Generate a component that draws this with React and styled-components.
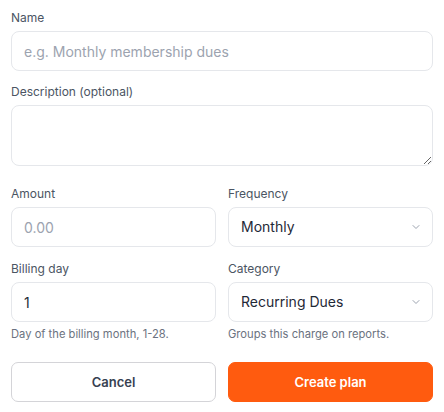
import React from "react";
import styled, { createGlobalStyle } from "styled-components";

const Global = createGlobalStyle`
  html, body { margin: 0; padding: 0; background: #ffffff; }
  body { font-family: Inter, "Noto Sans", sans-serif; -webkit-font-smoothing: antialiased; }
  * { box-sizing: border-box; }
`;

const Form = styled.form`
  width: 444px;
  padding: 10px 11px 10px 11px;
  display: flex;
  flex-direction: column;
  gap: 13px;
`;

const Row = styled.div`
  display: grid;
  grid-template-columns: 1fr 1fr;
  column-gap: 12px;
  margin-top: ${(p) => p.$shift || 0}px;
`;

const Field = styled.div`
  display: flex;
  flex-direction: column;
  min-width: 0;
`;

const Label = styled.label`
  font-size: 12px;
  line-height: 16px;
  font-weight: 400;
  color: #4b5563;
  margin-bottom: 5px;
`;

const controlBase = `
  width: 100%;
  border: 1px solid #e5e7eb;
  border-radius: 8px;
  background: #ffffff;
  font-family: Inter, "Noto Sans", sans-serif;
  font-size: 14px;
  line-height: 20px;
  color: #1f2937;
  padding: 0 12px;
  outline: none;
`;

const Input = styled.input`
  ${controlBase}
  height: 40px;
  &::placeholder { color: #9ca3af; }
`;

const TextArea = styled.textarea`
  ${controlBase}
  display: block;
  height: 61px;
  padding: 10px 12px;
  resize: vertical;
  margin-bottom: ${(p) => p.$after || 0}px;
`;

const SelectWrap = styled.div`
  position: relative;
`;

const Select = styled.select`
  ${controlBase}
  height: 40px;
  padding-top: 0;
  padding-bottom: 1px;
  appearance: none;
  -webkit-appearance: none;
  padding-right: 32px;
`;

const Chevron = styled.svg`
  position: absolute;
  right: 11px;
  top: 14px;
  width: 12px;
  height: 12px;
  pointer-events: none;
`;

const Hint = styled.p`
  margin: 5px 0 0;
  font-size: 11.2px;
  line-height: 14px;
  color: #6b7280;
`;

const Actions = styled.div`
  display: grid;
  grid-template-columns: 1fr 1fr;
  column-gap: 12px;
  margin-top: 8px;
`;

const Button = styled.button`
  height: 40px;
  border-radius: 7px;
  font-family: Inter, "Noto Sans", sans-serif;
  font-size: 13px;
  font-weight: 600;
  cursor: pointer;
  border: 1px solid ${(p) => (p.$primary ? "#ff5b0f" : "#d4d4d8")};
  background: ${(p) => (p.$primary ? "#ff5b0f" : "#ffffff")};
  color: ${(p) => (p.$primary ? "#ffffff" : "#374151")};
`;

function ChevronDown() {
  return (
    <Chevron viewBox="0 0 24 24" fill="none" stroke="#9ca3af" strokeWidth="2" strokeLinecap="round" strokeLinejoin="round">
      <path d="m6 9 6 6 6-6" />
    </Chevron>
  );
}

function SelectField({ label, value, options, hint }) {
  return (
    <Field>
      <Label>{label}</Label>
      <SelectWrap>
        <Select defaultValue={value}>
          {options.map((o) => (
            <option key={o}>{o}</option>
          ))}
        </Select>
        <ChevronDown />
      </SelectWrap>
      {hint && <Hint>{hint}</Hint>}
    </Field>
  );
}

export default function App() {
  return (
    <>
      <Global />
      <Form onSubmit={(e) => e.preventDefault()}>
        <Field>
          <Label>Name</Label>
          <Input placeholder="e.g. Monthly membership dues" />
        </Field>
        <Field>
          <Label>Description (optional)</Label>
          <TextArea $after={7} />
        </Field>
        <Row>
          <Field>
            <Label>Amount</Label>
            <Input placeholder="0.00" />
          </Field>
          <SelectField label="Frequency" value="Monthly" options={["Weekly", "Monthly", "Quarterly", "Yearly"]} />
        </Row>
        <Row $shift={1}>
          <Field>
            <Label>Billing day</Label>
            <Input defaultValue="1" />
            <Hint>Day of the billing month, 1-28.</Hint>
          </Field>
          <SelectField
            label="Category"
            value="Recurring Dues"
            options={["Recurring Dues", "One-time Fee", "Donation"]}
            hint="Groups this charge on reports."
          />
        </Row>
        <Actions>
          <Button type="button">Cancel</Button>
          <Button type="submit" $primary>Create plan</Button>
        </Actions>
      </Form>
    </>
  );
}
